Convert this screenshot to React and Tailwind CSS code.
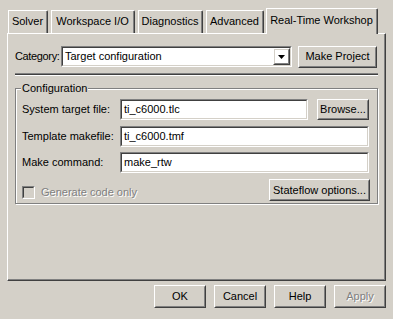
import React from "react";

const FONT = "font-['Liberation_Sans',Arial,sans-serif] text-[11px] leading-[13px] whitespace-nowrap";

function Btn({ className = "", children, disabled = false }) {
  return (
    <div className={`flex shrink-0 border border-t-white border-l-white border-r-[#404040] border-b-[#404040] ${className}`}>
      <div className="flex-1 flex items-center justify-center border border-t-[#d4d0c8] border-l-[#d4d0c8] border-r-[#808080] border-b-[#808080]">
        {disabled ? (
          <span className="text-[#808080] [text-shadow:1px_1px_0_#ffffff]">{children}</span>
        ) : (
          <span className="text-black">{children}</span>
        )}
      </div>
    </div>
  );
}

function Sunken({ className = "", children }) {
  return (
    <div className={`flex shrink-0 border border-t-[#808080] border-l-[#808080] border-r-white border-b-white ${className}`}>
      <div className="flex-1 flex items-center border border-t-[#404040] border-l-[#404040] border-r-[#d4d0c8] border-b-[#d4d0c8] bg-white">
        {children}
      </div>
    </div>
  );
}

function Tab({ className = "", children, selected = false }) {
  if (selected) {
    return (
      <div className={`relative z-10 flex shrink-0 h-[26px] mb-[-1px] bg-[#d4d0c8] border-l border-t border-r border-l-white border-t-white border-r-[#404040] rounded-tr-[2px] ${className}`}>
        <div className="flex-1 flex justify-center pt-[5px] border-r border-r-[#808080]">{children}</div>
      </div>
    );
  }
  return (
    <div className={`flex shrink-0 h-[23px] border-l border-t border-r border-l-white border-t-white border-r-[#404040] rounded-tr-[2px] ${className}`}>
      <div className="flex-1 flex justify-center pt-[4px] border-r border-r-[#808080]">{children}</div>
    </div>
  );
}

export default function App() {
  return (
    <div className={`w-[393px] h-[319px] bg-[#d4d0c8] pt-[8px] px-[7px] flex flex-col text-black ${FONT}`}>
      <div className="flex items-end h-[25px]">
        <Tab className="ml-[1px] w-[40px]">Solver</Tab>
        <Tab className="ml-[3px] w-[84px]">Workspace I/O</Tab>
        <Tab className="ml-[3px] w-[65px]">Diagnostics</Tab>
        <Tab className="ml-[3px] w-[58px]">Advanced</Tab>
        <Tab selected className="ml-[2px] w-[112px]">Real-Time Workshop</Tab>
      </div>

      <div className="flex h-[248px] border border-l-white border-t-white border-r-[#404040] border-b-[#404040]">
        <div className="flex-1 flex flex-col pl-[7px] pr-[6px] pt-[12px] border-r border-b border-r-[#808080] border-b-[#808080]">
          <div className="flex items-center h-[21px]">
            <div className="w-[46px] shrink-0 tracking-[-0.35px]">Category:</div>
            <Sunken className="w-[231px] h-[21px]">
              <div className="flex-1 pl-[2px]">Target configuration</div>
              <Btn className="w-[17px] h-[17px]">
                <svg width="7" height="4" viewBox="0 0 7 4">
                  <path d="M0 0h7L3.5 4z" fill="#000" />
                </svg>
              </Btn>
            </Sunken>
            <Btn className="ml-[6px] w-[79px] h-[22px]">Make Project</Btn>
          </div>

          <div className="mt-[6px] h-[3px] border-t border-t-[#808080] bg-[#404040] border-b border-b-white" />

          <div className="relative mt-[12px] border border-[#808080] shadow-[inset_1px_1px_0_#ffffff,1px_1px_0_#ffffff] pl-[6px] pr-[7px] pt-[10px] pb-[2px]">
            <div className="absolute -top-[7px] left-[5px] px-[1px] bg-[#d4d0c8]">Configuration</div>
            <div className="flex items-center h-[21px]">
              <div className="w-[98px] shrink-0">System target file:</div>
              <Sunken className="w-[188px] h-[21px]">
                <div className="pl-[2px]">ti_c6000.tlc</div>
              </Sunken>
              <Btn className="ml-[9px] w-[52px] h-[21px]">Browse...</Btn>
            </div>
            <div className="flex items-center h-[21px] mt-[6px]">
              <div className="w-[98px] shrink-0">Template makefile:</div>
              <Sunken className="w-[249px] h-[21px]">
                <div className="pl-[2px]">ti_c6000.tmf</div>
              </Sunken>
            </div>
            <div className="flex items-center h-[21px] mt-[5px]">
              <div className="w-[98px] shrink-0">Make command:</div>
              <Sunken className="w-[249px] h-[21px]">
                <div className="pl-[2px]">make_rtw</div>
              </Sunken>
            </div>
            <div className="flex items-start h-[22px] mt-[6px]">
              <div className="flex items-center mt-[7px]">
                <div className="w-[13px] h-[13px] shrink-0 border border-t-[#808080] border-l-[#808080] border-r-white border-b-white">
                  <div className="w-full h-full border border-t-[#404040] border-l-[#404040] border-r-[#d4d0c8] border-b-[#d4d0c8]" />
                </div>
                <span className="ml-[6px] text-[#808080] [text-shadow:1px_1px_0_#ffffff]">Generate code only</span>
              </div>
              <Btn className="ml-auto w-[101px] h-[22px]">Stateflow options...</Btn>
            </div>
          </div>
        </div>
      </div>

      <div className="flex justify-end gap-[8px] mt-[4px]">
        <Btn className="w-[52px] h-[23px]">OK</Btn>
        <Btn className="w-[52px] h-[23px]">Cancel</Btn>
        <Btn className="w-[52px] h-[23px]">Help</Btn>
        <Btn className="w-[52px] h-[23px]" disabled>Apply</Btn>
      </div>
    </div>
  );
}
